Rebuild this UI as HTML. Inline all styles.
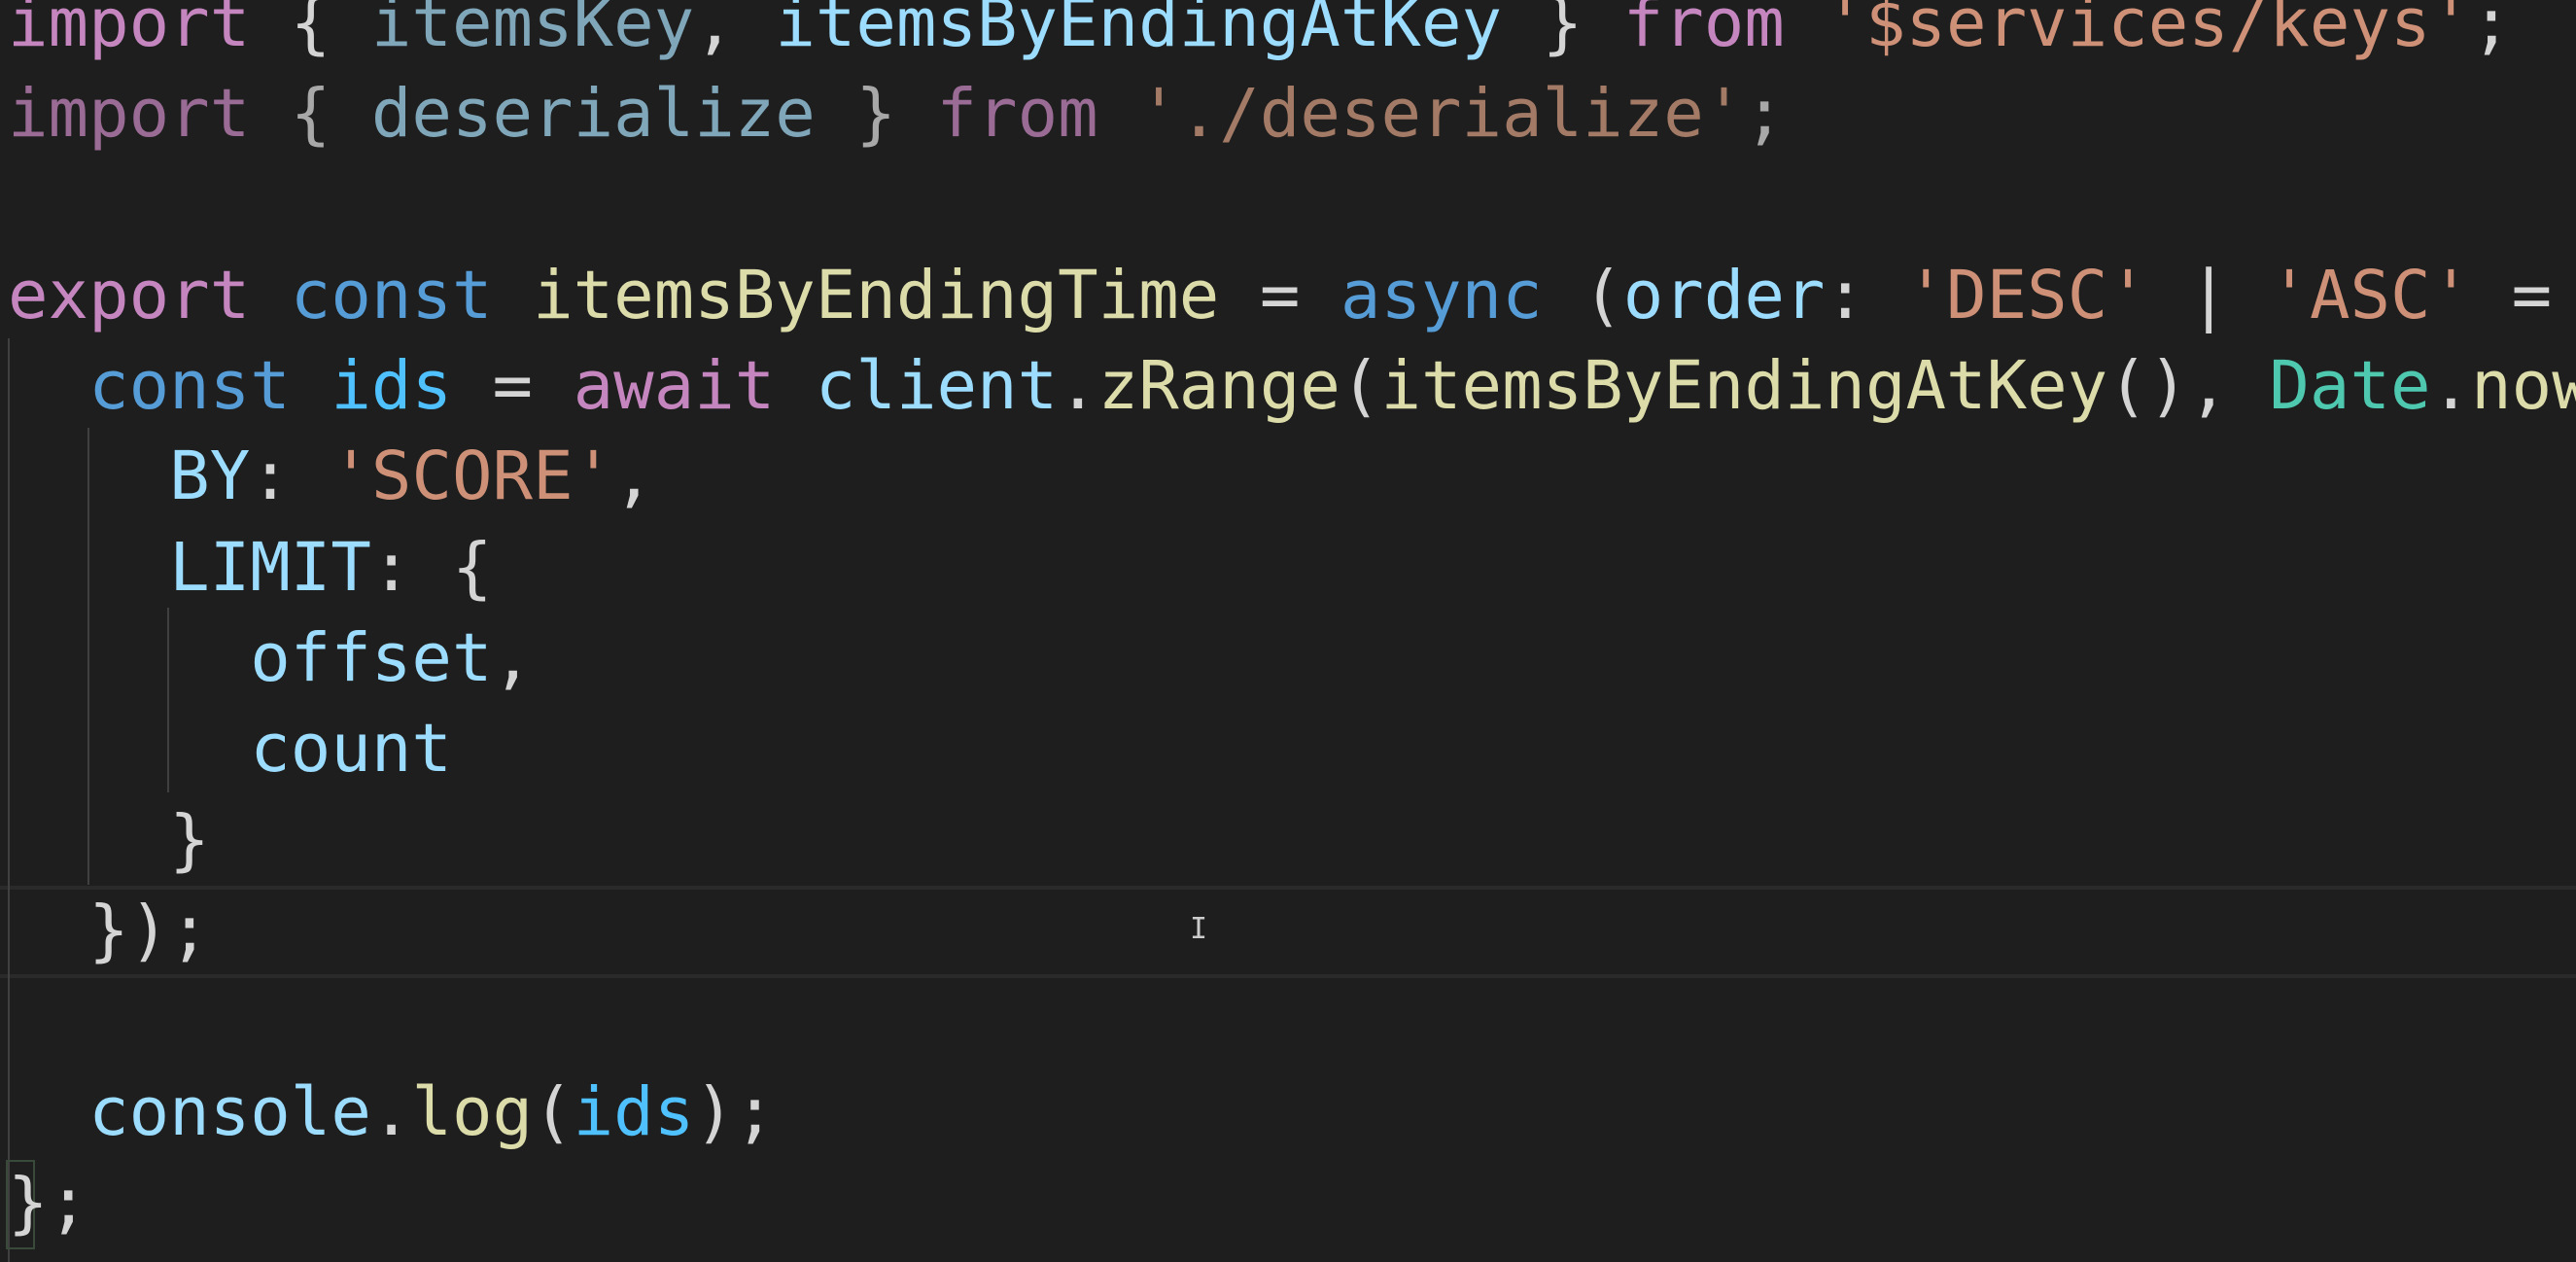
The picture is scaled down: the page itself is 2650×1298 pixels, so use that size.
<!DOCTYPE html>
<html><head><meta charset="utf-8"><style>
html,body{margin:0;padding:0;background:#1e1e1e;width:2650px;height:1298px;overflow:hidden;}
#wrap{position:absolute;left:0;top:0;width:2650px;height:1298px;overflow:hidden;}
#code{position:absolute;left:8px;top:-22px;width:2642px;overflow:hidden;font-family:"DejaVu Sans Mono","Liberation Mono",monospace;font-size:69px;line-height:93.3px;color:#d4d4d4;white-space:pre;}
.l{height:93.3px;}
.k{color:#c586c0}.kd{color:#9a6b95}
.b{color:#569cd6}
.v{color:#9cdcfe}.vd{color:#7fa6b9}
.c{color:#4fc1ff}
.f{color:#dcdcaa}
.s{color:#ce9178}.sd{color:#a37a66}
.t{color:#4ec9b0}
.pd{color:#a8a8a8}
.g{position:absolute;width:2px;background:#404040;}
#hl{position:absolute;left:0;top:911px;width:2650px;height:87px;border-top:4px solid #2a2a2a;border-bottom:4px solid #2a2a2a;box-sizing:content-box;}
#bm{position:absolute;left:6px;top:1193px;width:26px;height:88px;border:2px solid #3a4a3a;}
</style></head><body><div id="wrap">
<div id="hl" style="width:2650px;left:0;box-sizing:border-box;height:95px"></div>
<div class="g" style="left:8px;top:348px;height:950px"></div>
<div class="g" style="left:90px;top:440px;height:470px"></div>
<div class="g" style="left:172px;top:625px;height:190px"></div>
<div id="bm"></div>
<div id="code"><div class="l"><span class="k">import</span> { <span class="vd">itemsKey</span>, <span class="v">itemsByEndingAtKey</span> } <span class="k">from</span> <span class="s">'$services/keys'</span>;</div><div class="l"><span class="kd">import</span> <span class="pd">{</span> <span class="vd">deserialize</span> <span class="pd">}</span> <span class="kd">from</span> <span class="sd">'./deserialize'</span><span class="pd">;</span></div><div class="l"> </div><div class="l"><span class="k">export</span> <span class="b">const</span> <span class="f">itemsByEndingTime</span> = <span class="b">async</span> (<span class="v">order</span>: <span class="s">'DESC'</span> | <span class="s">'ASC'</span> =</div><div class="l">  <span class="b">const</span> <span class="c">ids</span> = <span class="k">await</span> <span class="v">client</span>.<span class="f">zRange</span>(<span class="f">itemsByEndingAtKey</span>(), <span class="t">Date</span>.<span class="f">now</span></div><div class="l">    <span class="v">BY</span>: <span class="s">'SCORE'</span>,</div><div class="l">    <span class="v">LIMIT</span>: {</div><div class="l">      <span class="v">offset</span>,</div><div class="l">      <span class="v">count</span></div><div class="l">    }</div><div class="l">  });</div><div class="l"> </div><div class="l">  <span class="v">console</span>.<span class="f">log</span>(<span class="c">ids</span>);</div><div class="l">};</div></div>
<div style="position:absolute;left:1224px;top:938px;color:#ccc;font-family:'DejaVu Sans Mono',monospace;font-size:30px;">I</div>
</div></body></html>
